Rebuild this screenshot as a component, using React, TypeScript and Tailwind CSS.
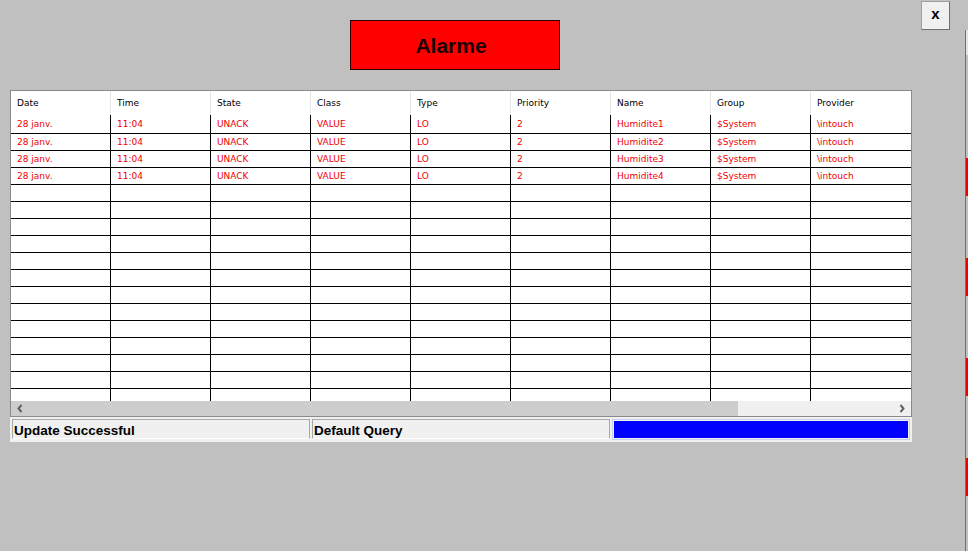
import React from "react";

const headers = ["Date", "Time", "State", "Class", "Type", "Priority", "Name", "Group", "Provider"];
const data = [1, 2, 3, 4].map((n) => ["28 janv.", "11:04", "UNACK", "VALUE", "LO", "2", `Humidite${n}`, "$System", "\\intouch"]);

function Row({ cells, first, last }: { cells: string[]; first?: boolean; last?: boolean }) {
  const h = first ? "h-[19px]" : last ? "h-[12px]" : "h-[17px]";
  const lh = first ? "leading-[18px]" : "leading-[16px]";
  return (
    <div className={`flex ${h} ${last ? "" : "border-b border-black"}`}>
      {cells.map((c, i) => (
        <div
          key={i}
          className={`w-[100px] shrink-0 pl-[6px] text-[9px] ${lh} text-[#f00000] overflow-hidden whitespace-nowrap ${i < 8 ? "border-r border-black" : ""}`}
        >
          {c}
        </div>
      ))}
    </div>
  );
}

export default function App() {
  const empty = Array(9).fill("");
  return (
    <div className="w-[968px] h-[551px] bg-[#c0c0c0] flex overflow-hidden" style={{ fontFamily: '"DejaVu Sans", sans-serif' }}>
      <div className="w-[965px] shrink-0 flex flex-col">
        {/* top */}
        <div className="h-[90px] flex items-start">
          <div className="ml-[350px] mt-[20px] w-[210px] h-[50px] bg-[#ff0000] border border-[#300000] flex items-center justify-center pr-[8px] pt-[2px]">
            <span className="text-[21px] font-bold text-[#1a0000]" style={{ fontFamily: '"Liberation Sans", Arial, sans-serif' }}>
              Alarme
            </span>
          </div>
          <div
            className="ml-[361px] mt-[1px] w-[29px] h-[29px] bg-[#f0f0f0] border border-[#a0a0a0] border-r-[#707070] border-b-[#707070] flex items-center justify-center text-[15px] font-bold text-black pb-[2px]"
            style={{ fontFamily: '"Liberation Sans", Arial, sans-serif' }}
          >
            x
          </div>
        </div>

        {/* table */}
        <div className="ml-[10px] w-[902px] border border-[#8a8a8a] bg-white flex flex-col">
          <div className="flex h-[24px]">
            {headers.map((h, i) => (
              <div
                key={h}
                className={`w-[100px] shrink-0 pl-[6px] text-[9px] leading-[24px] text-black ${i < 8 ? "border-r border-[#e6e6e6]" : ""}`}
              >
                {h}
              </div>
            ))}
          </div>
          {data.map((r, i) => (
            <Row key={i} cells={r} first={i === 0} />
          ))}
          {Array.from({ length: 12 }).map((_, i) => (
            <Row key={`e${i}`} cells={empty} />
          ))}
          <Row cells={empty} last />
          {/* scrollbar */}
          <div className="h-[15px] flex">
            <div className="w-[727px] bg-[#cdcdcd] flex items-center pl-[6px]">
              <svg width="6" height="9" viewBox="0 0 6 9">
                <polyline points="4.5,1 1.5,4.5 4.5,8" fill="none" stroke="#606060" strokeWidth="2" />
              </svg>
            </div>
            <div className="flex-1 bg-[#f0f0f0] flex items-center justify-end pr-[6px]">
              <svg width="6" height="9" viewBox="0 0 6 9">
                <polyline points="1.5,1 4.5,4.5 1.5,8" fill="none" stroke="#606060" strokeWidth="2" />
              </svg>
            </div>
          </div>
        </div>

        {/* status bar */}
        <div
          className="ml-[10px] w-[902px] h-[25px] bg-[#f0f0f0] flex gap-[2px] pl-[2px] pt-[2px]"
          style={{ fontFamily: '"Liberation Sans", Arial, sans-serif' }}
        >
          <div className="w-[298px] h-[20px] border-t border-l border-r border-[#a8a8a8] border-b border-b-white pl-[1px] text-[13.5px] font-bold leading-[22px] text-black">
            Update Successful
          </div>
          <div className="w-[298px] h-[20px] border-t border-l border-r border-[#a8a8a8] border-b border-b-white pl-[1px] text-[13.5px] font-bold leading-[22px] text-black">
            Default Query
          </div>
          <div className="w-[298px] h-[21px] border border-[#c8d0f0] p-[1px]">
            <div className="w-[294px] h-full bg-[#0000ff]" />
          </div>
        </div>
      </div>

      {/* right edge of another window */}
      <div className="w-[3px] shrink-0 pt-[30px]">
        <div className="h-full border-l border-[#707070] flex flex-col">
          <div className="h-[25px] bg-[#dde4ec]" />
          <div className="h-[103px]" />
          <div className="h-[38px] bg-[#ee0000]" />
          <div className="h-[62px]" />
          <div className="h-[38px] bg-[#ee0000]" />
          <div className="h-[62px]" />
          <div className="h-[38px] bg-[#ee0000]" />
          <div className="h-[62px]" />
          <div className="h-[38px] bg-[#ee0000]" />
        </div>
      </div>
    </div>
  );
}
